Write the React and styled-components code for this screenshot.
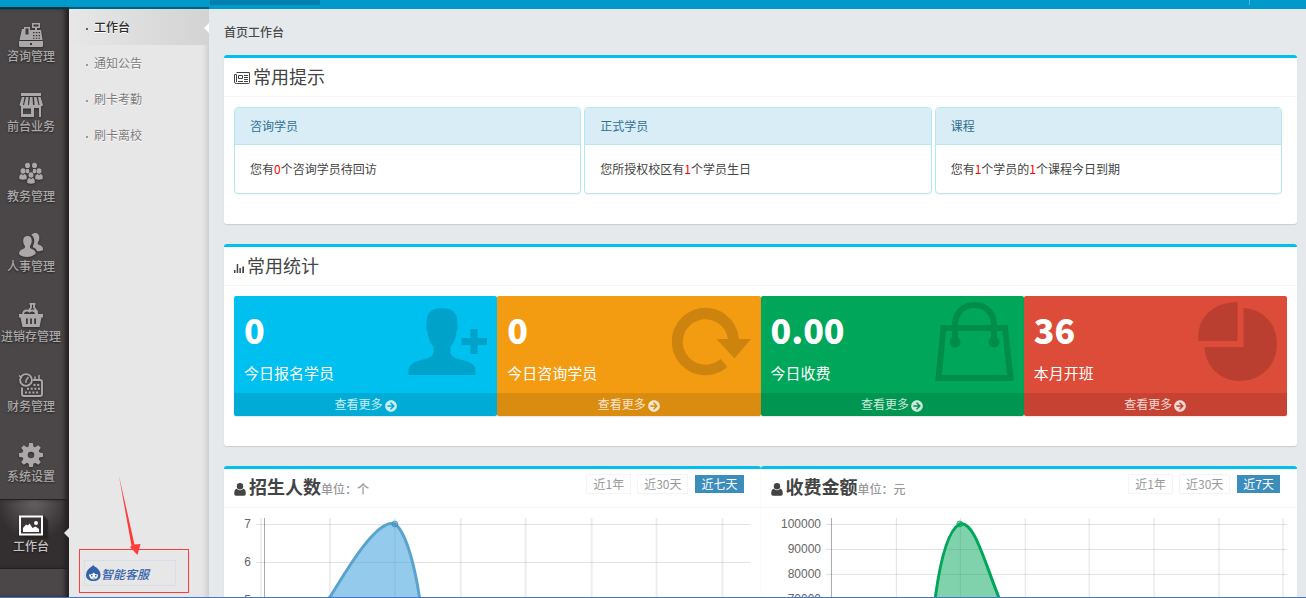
import { Fragment } from "react";
import styled, { createGlobalStyle, css } from "styled-components";
import { FaArrowCircleRight } from "react-icons/fa";

const color = {
  top: "#0099cc",
  topDark: "#0080ae",
  rail: "#4b4748",
  railText: "#aaa8a8",
  subBg: "#e8e7e8",
  mainBg: "#e5e9ec",
  accent: "#00c0ef",
  primary: "#3c8dbc",
  mark: "#ff3b3b",
  service: "#3462a8",
};

const GlobalStyle = createGlobalStyle`
  *, *::before, *::after { box-sizing: border-box; }
  body {
    margin: 0;
    font-family: "Noto Sans CJK SC", "Liberation Sans", sans-serif;
    font-size: 12px;
    color: #444;
    overflow: hidden;
  }
  h1, h2, h3, p, ul { margin: 0; padding: 0; }
  ul { list-style: none; }
  a { color: inherit; text-decoration: none; }
  svg { display: block; }
`;

const Page = styled.div`
  height: 100vh;
  display: flex;
  flex-direction: column;
  overflow: hidden;
  background: ${color.mainBg};
  border-bottom: 1px solid #4674c8;
`;

const TopBar = styled.header`
  flex: none;
  height: 9px;
  display: flex;
  justify-content: space-between;
  padding-left: 210px;
  background: ${color.top};
`;

const TopTab = styled.div`
  width: 110px;
  height: 5px;
  background: ${color.topDark};
`;

const TopUser = styled.div`
  width: 57px;
  height: 5px;
  border-left: 1px solid #4db8dc;
`;

const Shell = styled.div`
  flex: 1;
  min-height: 0;
  display: flex;
`;

const Rail = styled.nav`
  position: relative;
  flex: none;
  width: 69px;
  background: ${color.rail};
  box-shadow: 0 -2px 0 rgba(0, 20, 30, 0.75), inset -5px 0 4px -1px #242122;
`;

const RailItem = styled.a`
  position: relative;
  display: flex;
  flex-direction: column;
  align-items: center;
  height: 70px;
  padding: 14px 7px 0 0;
  line-height: 18px;
  font-weight: 500;
  white-space: nowrap;
  color: ${color.railText};
  text-shadow: 0 1px 2px rgba(0, 0, 0, 0.6);
  svg {
    width: 24px;
    height: 24px;
    overflow: visible;
    filter: drop-shadow(0 1px 1px rgba(0, 0, 0, 0.4));
  }
  ${(props) =>
    props.$active &&
    css`
      padding-top: 13px;
      color: #c4c2c2;
      background: radial-gradient(
        ellipse 38px 40px at 34px 0,
        #676263,
        #332e2f
      );
      border-top: 1px solid #232020;
      border-bottom: 1px solid #232020;
      box-shadow: inset -5px 0 4px -1px #242122;
      &::after {
        content: "";
        position: absolute;
        right: 0;
        top: 28px;
        border: 5px solid transparent;
        border-right-color: ${color.subBg};
        border-left: 0;
      }
    `}
`;

const SubMenu = styled.nav`
  position: relative;
  flex: none;
  width: 140px;
  display: flex;
  flex-direction: column;
  background: ${color.subBg};
  box-shadow: 0 -2px 0 rgba(0, 40, 60, 0.5),
    inset -6px 0 6px -4px rgba(0, 0, 0, 0.14);
`;

const SubItem = styled.a`
  position: relative;
  display: flex;
  align-items: center;
  gap: 6px;
  height: 36px;
  padding: 0 0 2px 17px;
  color: #7c7b7b;
  text-shadow: 0 1px 0 #fff;
  &::before {
    content: "";
    width: 2px;
    height: 2px;
    margin-top: 6px;
    background: currentColor;
    opacity: 0.7;
  }
  ${(props) =>
    props.$active &&
    css`
      color: #2c2c2c;
      font-weight: 500;
      background: linear-gradient(to right, #e8e7e8, #d3d3d3);
      &::after {
        content: "";
        position: absolute;
        right: 0;
        top: 14px;
        border: 5px solid transparent;
        border-right-color: #fff;
        border-left: 0;
      }
    `}
`;

const ServiceFrame = styled.div`
  position: relative;
  width: 110px;
  height: 44px;
  margin: auto 0 4px 10px;
  padding: 10px 12px 0 4px;
  border: 1px solid ${color.mark};
`;

const ServiceLink = styled.a`
  display: flex;
  align-items: center;
  height: 26px;
  padding-left: 1px;
  border: 1px solid #d8dde8;
  font-style: italic;
  font-weight: 500;
  color: ${color.service};
`;

const Pointer = styled.svg`
  position: absolute;
  left: 38px;
  bottom: 37px;
`;

const Main = styled.main`
  flex: 1;
  min-width: 0;
  padding: 0 9px 0 15px;
  overflow: hidden;
`;

const Crumb = styled.h1`
  height: 46px;
  line-height: 46px;
  font-size: 12px;
  font-weight: 500;
  color: #4a4a4a;
`;

const Panel = styled.section`
  flex: 1;
  min-width: 0;
  margin-bottom: 20px;
  background: #fff;
  border-top: 3px solid ${color.accent};
  border-radius: 3px;
  box-shadow: 0 1px 1px rgba(0, 0, 0, 0.12);
`;

const PanelHead = styled.div`
  display: flex;
  align-items: center;
  height: 39px;
  padding: 0 16px 2px 10px;
  border-bottom: 1px solid #f4f4f4;
`;

const PanelTitle = styled.h2`
  flex: 1;
  display: flex;
  align-items: baseline;
  gap: 3px;
  font-size: 18px;
  line-height: 20px;
  font-weight: ${(props) => (props.$strong ? 700 : 400)};
  svg {
    align-self: flex-end;
    margin-bottom: ${(props) => (props.$strong ? 3 : 2)}px;
  }
  small {
    margin-left: -3px;
    font-size: 12px;
    font-weight: 500;
    color: #999;
  }
`;

const PanelBody = styled.div`
  padding: 10px 10px ${(props) => (props.$flush ? 0 : 30)}px;
  ${(props) => props.$flush && "padding-top: 0;"}
`;

const TipGrid = styled.div`
  display: grid;
  grid-template-columns: repeat(3, 1fr);
  gap: 3px;
  padding-right: 5px;
`;

const Tip = styled.article`
  border: 1px solid #b6e6ef;
  border-radius: 4px;
  overflow: hidden;
  box-shadow: 0 1px 1px rgba(0, 0, 0, 0.05);
  h3 {
    height: 37px;
    line-height: 35px;
    padding: 0 15px;
    font-size: 12px;
    font-weight: 400;
    color: #31708f;
    background: #d9edf7;
    border-bottom: 1px solid #b6e6ef;
  }
  p {
    height: 48px;
    line-height: 48px;
    padding: 0 15px;
  }
  em {
    font-style: normal;
    color: #f00;
  }
`;

const StatGrid = styled.div`
  display: grid;
  grid-template-columns: repeat(4, 1fr);
`;

const Stat = styled.article`
  color: #fff;
  background: ${(props) => props.$bg};
  border-radius: 2px;
  overflow: hidden;
  box-shadow: 0 1px 1px rgba(0, 0, 0, 0.1);
`;

const StatBody = styled.div`
  display: flex;
  justify-content: space-between;
  height: 97px;
  padding: 6px 10px 0;
  svg {
    width: 79px;
    height: 79px;
    opacity: 0.15;
  }
`;

const StatValue = styled.p`
  height: 58px;
  line-height: 55px;
  font-size: 34px;
  font-weight: 900;
`;

const StatLabel = styled.p`
  font-size: 15px;
  line-height: 26px;
`;

const StatMore = styled.a`
  display: flex;
  align-items: center;
  justify-content: center;
  gap: 2px;
  height: 23px;
  padding-bottom: 2px;
  background: rgba(0, 0, 0, 0.1);
  color: rgba(255, 255, 255, 0.8);
  svg {
    margin-top: 4px;
  }
`;

const ChartRow = styled.div`
  display: flex;
`;

const RangeGroup = styled.div`
  display: flex;
  gap: 6px;
  margin-bottom: 6px;
`;

const RangeButton = styled.button`
  height: 20px;
  padding: 0 6px;
  border: 1px solid ${(props) => (props.$active ? "#fff" : "#f4f4f4")};
  background: ${(props) => (props.$active ? color.primary : "#fff")};
  color: ${(props) => (props.$active ? "#fff" : "#999")};
  font: inherit;
  line-height: 18px;
`;

const ChartSvg = styled.svg`
  width: 100%;
  height: auto;
  text {
    font-family: "Liberation Sans", Arial, sans-serif;
    font-size: 12px;
    fill: #666;
    text-anchor: end;
  }
`;

const RegisterIcon = () => (
  <svg viewBox="0 0 24 24" fill="currentColor" fillRule="evenodd">
    <path d="M13 0h8v5h-3v2h4l1.500 10H.5L3 6h2V4h6v3h5V5h-3zM14.500 1.500v2h5v-2zM6.500 5.500v6h3v-6zM14 9v1.200h1.500V9zm2.800 0v1.200h1.500V9zm2.800 0v1.200H21V9zM14 12v1.200h1.500V12zm2.800 0v1.200h1.500V12zm2.800 0v1.200H21V12zM14 14.800v1h1.500v-1zm2.800 0v1h1.500v-1zm2.800 0v1H21v-1z" />
    <path d="M0 18h24v4.500q0 1.500-1.500 1.500h-21Q0 24 0 22.500zM11 20v2h2v-2z" />
  </svg>
);

const StoreIcon = () => (
  <svg viewBox="0 0 24 24" fill="currentColor" fillRule="evenodd">
    <path d="M2 0h20v3H2z" />
    <path d="M3 4h2.500L4 12Q2 14.500.5 12zM7 4h2.500L9 12q-2 2.500-4 0zM11 4h2.500l.5 8q-2 2.500-4 0zM15 4h2.500l2 8q-2 2.500-4 0zM19 4h2.500l2.500 8q-1.500 2.500-3.500 0z" />
    <path d="M2 12h20v12h-2v-9h-5v9H2zM4 15.500V21h8v-5.500z" />
  </svg>
);

const GROUP = [
  [8.500, 2.500],
  [15.500, 2.500],
  [4, 8],
  [20, 8],
  [12, 12],
];

const GroupIcon = () => (
  <svg viewBox="0 0 24 24" fill="currentColor">
    {GROUP.map(([x, y]) => (
      <Fragment key={x}>
        <ellipse cx={x} cy={y} rx="2.500" ry="2.800" />
        {y > 5 ? (
          <path
            d={`M${x - 3.700} ${y + 8}v-2.500q0-2.500 2.400-2.500l1.300 1.300 1.300-1.300q2.400 0 2.400 2.500v2.500q-3.700 1.500-7.400 0z`}
          />
        ) : (
          <path d={`M${x - 1.300} ${y + 3.500}h2.600l.7 3.500-2 1-2-1z`} />
        )}
      </Fragment>
    ))}
  </svg>
);

const StaffIcon = () => (
  <svg viewBox="0 0 24 24" fill="currentColor">
    <path d="M12.500 2C13.500.5 15 0 16.300 0 19 0 20.500 2 20.300 5c0 2-.8 3.500-1.500 4.500-.3 1.500.2 2 1.500 2.500 2.500.8 4 2 3.700 5-1.500 1.200-3.500 1.500-6 1.300-.5-2-2-3.300-4-4 0-1-.1-1.600.4-2.300C16 9 15.500 4 12.500 2z" />
    <path d="M8.500 3c3 0 4.500 2.200 4.200 5.300-.1 2-.9 3.500-1.700 4.700-.4 1.600.2 2.400 1.800 3 2.500.8 4 2.300 4 4.500C14.500 23 11 24 8 24c-3.500 0-6.500-1-8-3 0-2.500 1.500-4.200 4-5 1.700-.6 2.300-1.400 1.900-3C5 11.800 4.300 10.300 4.200 8.300 4 5.200 5.500 3 8.500 3z" />
  </svg>
);

const BasketIcon = () => (
  <svg viewBox="0 0 24 24" fill="currentColor" fillRule="evenodd">
    <path
      d="M10.500.9h6M12 1v3.500L9.500 8M15 1v3.500l3 4V11M4 11q.5-3.500 4-3.500 1.500 0 2.500 1 1-1 3-1 3 0 3.500 3.500"
      fill="none"
      stroke="currentColor"
      strokeWidth="1.900"
    />
    <path d="M0 11h24v3.500h-1.500L20.500 24h-17L1.500 14.500H0zM7 15.500V21h1.800v-5.500zm4.100 0V21h1.800v-5.500zm4.100 0V21H17v-5.500z" />
  </svg>
);

const CalendarIcon = () => (
  <svg viewBox="0 0 24 24" fill="none" stroke="currentColor" strokeWidth="1.900">
    <path d="M3 14.500V21q0 2 2 2h16q2 0 2-2V9q0-2-2-2h-7" />
    <circle cx="7" cy="7" r="5.900" />
    <path d="M7 7.500 9.500 4M7 7v3M0 2.500 3 5M16 8V3.500M20 8V2" strokeWidth="1.500" />
    <path
      d="M14.500 12H21M8 15.800h13M6 19.500h13"
      strokeDasharray="2 1.700"
      strokeWidth="2"
    />
  </svg>
);

const TEETH = [0, 45, 90, 135, 180, 225, 270, 315];

const GearIcon = () => (
  <svg viewBox="0 0 24 24" fill="currentColor">
    {TEETH.map((deg) => (
      <path
        key={deg}
        d="M10.200 0h3.600l1 5h-5.600z"
        transform={`rotate(${deg} 12 12)`}
      />
    ))}
    <circle
      cx="12"
      cy="12"
      r="6"
      fill="none"
      stroke="currentColor"
      strokeWidth="5.500"
    />
  </svg>
);

const PictureIcon = () => (
  <svg viewBox="0 0 24 24">
    <path d="M24 2l5 5v18H7l-5-3h22z" fill="#262223" opacity=".7" />
    <path d="M1 3.500h22v18H1z" fill="#3a3536" stroke="#fff" strokeWidth="2" />
    <path d="M4 19v-4l3-3.500 2 1 1.500-2 3 4.500 3-1.500L20 16v3z" fill="#fff" />
    <circle cx="17" cy="10" r="2" fill="#fff" />
  </svg>
);

const NewsIcon = () => (
  <svg width="16" height="12" viewBox="0 0 16 12" fill="none" stroke="currentColor">
    <path d="M2.500.5h13v10q0 1-1 1h-12q-2 0-2-1.500V2.500h2V10" />
    <path d="M4.500 3.500h4v3h-4zM10 3.500h4M10 5.500h4M10 7.500h4M4 9.500h5M10 9.500h4" />
  </svg>
);

const BarsIcon = () => (
  <svg width="10" height="10" viewBox="0 0 10 10" fill="currentColor">
    <path d="M0 7h1.500v3H0zM2.700 1h1.500v9H2.700zM5.400 5h1.500v5H5.400zM8.300 3.500H10V10H8.300z" />
  </svg>
);

const UserIcon = () => (
  <svg width="12" height="13" viewBox="0 0 12 13" fill="currentColor">
    <circle cx="6" cy="3.300" r="3.200" />
    <path d="M2.800 5.800Q6 8.800 9.200 5.800 11.800 6.500 11.800 10.500 11.800 12.700 10 12.700H2Q.2 12.700.2 10.500.2 6.500 2.800 5.800z" />
  </svg>
);

const ServiceIcon = () => (
  <svg width="15" height="17" viewBox="0 0 15 17" fill={color.service}>
    <path d="M7.500 0C6.500 1.500 0 4 0 10c0 4 3.500 6 7.500 6s7-2 7-6c0-4-2-5.500-4-7.500C9 2 8 1 7.500 0z" />
    <path
      d="M3 9q3 1.500 4.500-1.500Q9.500 10 12 9.500q0 4.800-4.500 5Q3 14 3 9z"
      fill="#fff"
    />
    <path d="M5 10h1.500v1.500H5zM9 10h1.500v1.500H9zM6.500 12.700h3v.8h-3z" />
  </svg>
);

const PersonAddIcon = () => (
  <svg viewBox="0 0 79 79">
    <path d="M.5 73c-.3-7 0-8.500 4-11.500C10 57 25.500 58 25.500 50v-5.500C21.500 41 20 35 19.500 29.500c-1.500-2-1.700-4.500-1-7C18 11 23 6 34 6s16 5 15.500 16.500c.7 2.500.5 5-1 7C48 35 46.500 41 42.500 44.500V50c0 8 15 7 21 11.500 4 3 4.300 4.500 4 11.500z" />
    <path d="M62.500 27h7v9H79v7h-9.500v9h-7v-9h-9v-7h9z" />
  </svg>
);

const RefreshIcon = () => (
  <svg viewBox="0 0 79 79">
    <path d="M67 37A33.700 33.700 0 1 0 55.500 65L48.500 57A22.700 22.700 0 1 1 56 37H44.500L62.500 56.500 79 37z" />
  </svg>
);

const BagIcon = () => (
  <svg viewBox="0 0 79 79" fill="none" stroke="#000" strokeWidth="6">
    <path d="M8.500 26h61.500L75.500 76H3.500z" />
    <path d="M20 40V23.500C20 11 28 3 39.500 3S59 11 59 23.500V40" />
    <g fill="#000" stroke="none">
      <circle cx="20" cy="40" r="5.500" />
      <circle cx="59" cy="40" r="5.500" />
    </g>
  </svg>
);

const PieIcon = () => (
  <svg viewBox="0 0 79 79">
    <path d="M39.500 0v39H.3C-1.500 15 16 0 39.500 0z" />
    <path d="M45.500 6v39h-39C7 64 22 79 42 79c21 0 37-16 37-37C79 22 65 7 45.500 6z" />
  </svg>
);

const RAIL_ITEMS = [
  { label: "咨询管理", icon: RegisterIcon },
  { label: "前台业务", icon: StoreIcon },
  { label: "教务管理", icon: GroupIcon },
  { label: "人事管理", icon: StaffIcon },
  { label: "进销存管理", icon: BasketIcon },
  { label: "财务管理", icon: CalendarIcon },
  { label: "系统设置", icon: GearIcon },
  { label: "工作台", icon: PictureIcon, active: true },
];

const SUB_ITEMS = ["工作台", "通知公告", "刷卡考勤", "刷卡离校"];

const TIPS = [
  { title: "咨询学员", parts: ["您有", 0, "个咨询学员待回访"] },
  { title: "正式学员", parts: ["您所授权校区有", 1, "个学员生日"] },
  { title: "课程", parts: ["您有", 1, "个学员的", 1, "个课程今日到期"] },
];

const STATS = [
  { value: "0", label: "今日报名学员", bg: "#00c0ef", icon: PersonAddIcon },
  { value: "0", label: "今日咨询学员", bg: "#f39c12", icon: RefreshIcon },
  { value: "0.00", label: "今日收费", bg: "#00a65a", icon: BagIcon },
  { value: "36", label: "本月开班", bg: "#dd4b39", icon: PieIcon },
];

const CHARTS = [
  {
    title: "招生人数",
    unit: "单位：个",
    ranges: ["近1年", "近30天", "近七天"],
    labels: ["7", "6", "5"],
    step: 38,
    axis: 30,
    labelX: 17,
    gap: 65.5,
    gridWidth: 2,
    gridColor: "rgba(0,0,0,.07)",
    line: "M80 120 95 91C115 58 144 10 161 16 173 24 182 64 186 92L190 120",
    stroke: "#5aa3ce",
    fill: "rgba(60,160,220,.55)",
    points: [
      [161, 16],
      [95, 92],
    ],
    pointColor: "#3c8dbc",
  },
  {
    title: "收费金额",
    unit: "单位：元",
    ranges: ["近1年", "近30天", "近7天"],
    labels: ["100000", "90000", "80000", "70000"],
    step: 25,
    axis: 60,
    labelX: 50,
    gap: 64.6,
    gridWidth: 1,
    gridColor: "rgba(0,0,0,.12)",
    line: "M161 120C165 78 173 24 189 16 203 12 213 52 229 92L239 120",
    stroke: "#00a65a",
    fill: "rgba(0,166,90,.5)",
    points: [[189, 16]],
    pointColor: "#00a65a",
  },
];

const COLUMNS = [1, 2, 3, 4, 5, 6, 7];

function Chart({ chart }) {
  const { axis, labels, step, gap } = chart;
  return (
    <ChartSvg viewBox="0 0 517 120" role="img" aria-label={chart.title}>
      {COLUMNS.map((n) => (
        <path
          key={n}
          d={`M${Math.round(axis + gap * n) + (chart.gridWidth % 2) / 2} 10V120`}
          stroke={chart.gridColor}
          strokeWidth={chart.gridWidth}
        />
      ))}
      {chart.gridWidth > 1 && (
        <path d={`M${axis - 3} 10V120`} stroke="#eee" strokeWidth="2" />
      )}
      <path d={`M${axis + 0.5} 10V120`} stroke="#aaa" />
      {labels.map((label, i) => (
        <g key={label}>
          <path
            d={`M${axis - (chart.gridWidth > 1 ? 8 : 5)} ${16.5 + step * i}H517`}
            stroke="rgba(0,0,0,.12)"
          />
          <text x={chart.labelX} y={20 + step * i}>
            {label}
          </text>
        </g>
      ))}
      <path
        d={chart.line}
        fill={chart.fill}
        stroke={chart.stroke}
        strokeWidth="3"
      />
      {chart.points.map(([x, y]) => (
        <circle
          key={x}
          cx={x}
          cy={y}
          r="3"
          fill={chart.pointColor}
          fillOpacity=".5"
          stroke={chart.pointColor}
          strokeOpacity=".7"
        />
      ))}
    </ChartSvg>
  );
}

function Tips() {
  return (
    <Panel>
      <PanelHead>
        <PanelTitle>
          <NewsIcon />
          常用提示
        </PanelTitle>
      </PanelHead>
      <PanelBody>
        <TipGrid>
          {TIPS.map((tip) => (
            <Tip key={tip.title}>
              <h3>{tip.title}</h3>
              <p>
                {tip.parts.map((part, i) =>
                  typeof part === "number" ? <em key={i}>{part}</em> : part
                )}
              </p>
            </Tip>
          ))}
        </TipGrid>
      </PanelBody>
    </Panel>
  );
}

function Stats() {
  return (
    <Panel>
      <PanelHead>
        <PanelTitle>
          <BarsIcon />
          常用统计
        </PanelTitle>
      </PanelHead>
      <PanelBody>
        <StatGrid>
          {STATS.map(({ value, label, bg, icon: Icon }) => (
            <Stat key={label} $bg={bg}>
              <StatBody>
                <div>
                  <StatValue>{value}</StatValue>
                  <StatLabel>{label}</StatLabel>
                </div>
                <Icon />
              </StatBody>
              <StatMore href="#">
                查看更多
                <FaArrowCircleRight size={12} />
              </StatMore>
            </Stat>
          ))}
        </StatGrid>
      </PanelBody>
    </Panel>
  );
}

function App() {
  return (
    <Page>
      <GlobalStyle />
      <TopBar>
        <TopTab />
        <TopUser />
      </TopBar>
      <Shell>
        <Rail>
          {RAIL_ITEMS.map(({ label, icon: Icon, active }) => (
            <RailItem key={label} href="#" $active={active}>
              <Icon />
              {label}
            </RailItem>
          ))}
        </Rail>
        <SubMenu>
          {SUB_ITEMS.map((item, i) => (
            <SubItem key={item} href="#" $active={i === 0}>
              {item}
            </SubItem>
          ))}
          <ServiceFrame>
            <ServiceLink href="#">
              <ServiceIcon />
              智能客服
            </ServiceLink>
            <Pointer width="24" height="80" viewBox="0 0 24 80">
              <path
                d="M1 1 16.500 69.500 22.500 69 19.500 80 12 72 13.500 71z"
                fill={color.mark}
              />
            </Pointer>
          </ServiceFrame>
        </SubMenu>
        <Main>
          <Crumb>首页工作台</Crumb>
          <Tips />
          <Stats />
          <ChartRow>
            {CHARTS.map((chart) => (
              <Panel key={chart.title}>
                <PanelHead>
                  <PanelTitle $strong>
                    <UserIcon />
                    {chart.title}
                    <small>{chart.unit}</small>
                  </PanelTitle>
                  <RangeGroup>
                    {chart.ranges.map((range, i) => (
                      <RangeButton key={range} type="button" $active={i === 2}>
                        {range}
                      </RangeButton>
                    ))}
                  </RangeGroup>
                </PanelHead>
                <PanelBody $flush>
                  <Chart chart={chart} />
                </PanelBody>
              </Panel>
            ))}
          </ChartRow>
        </Main>
      </Shell>
    </Page>
  );
}

export default App;
